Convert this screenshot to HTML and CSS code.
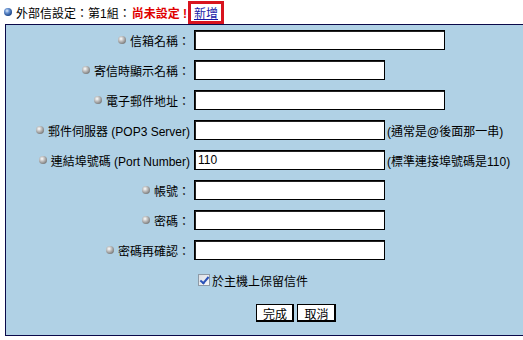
FILE: index.html
```html
<!DOCTYPE html>
<html lang="zh-Hant">
<head>
    <meta charset="UTF-8">
    <title>外部信設定</title>
    <link rel="stylesheet" href="styles.css">
</head>
<body>
    <div class="title-bar">
        <span class="ball ball-blue"></span>
        <span>外部信設定：第1組：</span>
        <span class="state">尚未設定 !</span>
        <span class="mark"><a href="#" class="add-link">新增</a></span>
    </div>

    <form class="panel">
        <div class="grid">
            <label class="lbl"><span class="ball"></span>信箱名稱：</label>
            <div class="wide"><input type="text" class="box box-long"></div>

            <label class="lbl"><span class="ball"></span>寄信時顯示名稱：</label>
            <div class="wide"><input type="text" class="box"></div>

            <label class="lbl"><span class="ball"></span>電子郵件地址：</label>
            <div class="wide"><input type="text" class="box box-long"></div>

            <label class="lbl"><span class="ball"></span>郵件伺服器 (POP3 Server)</label>
            <div><input type="text" class="box"></div>
            <div class="hint">(通常是@後面那一串)</div>

            <label class="lbl"><span class="ball"></span>連結埠號碼 (Port Number)</label>
            <div><input type="text" class="box" value="110"></div>
            <div class="hint">(標準連接埠號碼是110)</div>

            <label class="lbl"><span class="ball"></span>帳號：</label>
            <div class="wide"><input type="text" class="box"></div>

            <label class="lbl"><span class="ball"></span>密碼：</label>
            <div class="wide"><input type="password" class="box"></div>

            <label class="lbl"><span class="ball"></span>密碼再確認：</label>
            <div class="wide"><input type="password" class="box"></div>

            <div class="wide keep">
                <input type="checkbox" class="chk" id="keepMail" checked>
                <label for="keepMail">於主機上保留信件</label>
            </div>

            <div class="wide actions">
                <button type="button" class="btn">完成</button>
                <button type="button" class="btn">取消</button>
            </div>
        </div>
    </form>
</body>
</html>
```

FILE: styles.css
```css
body {
    margin: 0;
    font-family: "Liberation Sans", "Noto Sans CJK TC", sans-serif;
    font-size: 12px;
    color: #000;
    background-color: #fff;
}
.title-bar {
    display: flex;
    align-items: center;
    height: 24px;
    padding-left: 4px;
}
.ball {
    display: inline-block;
    width: 8px;
    height: 8px;
    margin-right: 4px;
    border-radius: 50%;
    background: radial-gradient(circle at 38% 35%, #fff 0%, #d0d0d0 25%, #8c8c8c 65%, #4e4e4e 100%);
    vertical-align: middle;
}
.ball-blue {
    background: radial-gradient(circle at 38% 35%, #e0ecfa 0%, #6a94d2 30%, #1f4a8e 70%, #0b2352 100%);
}
.state {
    color: #e00000;
    font-weight: bold;
    margin-left: 1px;
}
.mark {
    display: inline-flex;
    align-items: center;
    height: 17px;
    margin-left: 1px;
    padding: 0 3px;
    border: 3px solid #d8141e;
}
.add-link {
    color: #1a1aa8;
    text-decoration: underline;
}
.panel {
    box-sizing: border-box;
    height: 312px;
    margin: 0 0 0 5px;
    padding-top: 5px;
    border: 1px solid #0a0a4a;
    border-right: none;
    background-color: #b0d1e5;
}
.grid {
    display: grid;
    grid-template-columns: 186px 191px auto;
    grid-auto-rows: 20px;
    column-gap: 2px;
    row-gap: 10px;
}
.lbl {
    display: flex;
    align-items: center;
    justify-content: flex-end;
    padding-right: 2px;
    white-space: nowrap;
}
.wide {
    grid-column: 2 / 4;
}
.hint {
    display: flex;
    align-items: center;
    white-space: nowrap;
}
.box {
    box-sizing: border-box;
    display: block;
    width: 191px;
    height: 20px;
    margin: 0;
    padding: 1px 3px;
    border: 1px solid #000;
    box-shadow: inset 1px 1px 0 #222;
    background: #fff;
    font-family: "Liberation Sans", "Noto Sans CJK TC", sans-serif;
    font-size: 12px;
}
.box-long {
    width: 251px;
}
.keep {
    display: flex;
    align-items: center;
}
.chk {
    appearance: none;
    box-sizing: border-box;
    position: relative;
    width: 12px;
    height: 12px;
    margin: 0 2px 0 4px;
    border: 1px solid #8e9aa6;
    background: linear-gradient(135deg, #dcdfe4, #f6f7f9);
}
.chk:checked::after {
    content: "";
    position: absolute;
    left: 3px;
    top: 0;
    width: 3px;
    height: 7px;
    border: solid #2a52b8;
    border-width: 0 2px 2px 0;
    transform: rotate(40deg);
}
.actions {
    display: flex;
    align-items: center;
    gap: 3px;
    margin-top: 6px;
    padding-left: 62px;
}
.btn {
    box-sizing: border-box;
    height: 18px;
    width: 38px;
    padding: 0;
    border: 1px solid #000;
    box-shadow: inset -1px -1px 0 #000;
    background: #fff;
    font-family: "Liberation Sans", "Noto Sans CJK TC", sans-serif;
    font-size: 12px;
    cursor: pointer;
}
.btn + .btn {
    width: 39px;
}
```
